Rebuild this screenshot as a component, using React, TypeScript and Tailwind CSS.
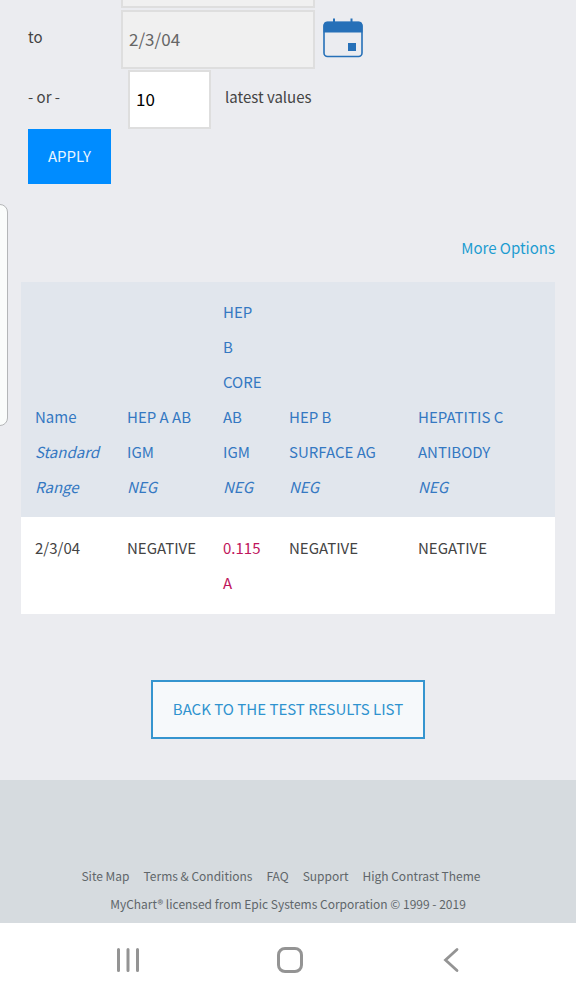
import React from "react";

const columns = [
  { name: "HEP A AB IGM", range: "NEG", width: "w-[96px]" },
  { name: "HEP B CORE AB IGM", range: "NEG", width: "w-[66px]" },
  { name: "HEP B SURFACE AG", range: "NEG", width: "w-[129px]" },
  { name: "HEPATITIS C ANTIBODY", range: "NEG", width: "" },
];

const results = [
  { value: "NEGATIVE", flagged: false },
  { value: "0.115 A", flagged: true },
  { value: "NEGATIVE", flagged: false },
  { value: "NEGATIVE", flagged: false },
];

const footerLinks = ["Site Map", "Terms & Conditions", "FAQ", "Support", "High Contrast Theme"];

function CalendarIcon() {
  return (
    <svg viewBox="0 0 40 40" className="h-10 w-10" fill="none" aria-hidden="true">
      <path d="M11 0.5v5M28.5 0.5v5" stroke="#2670b8" strokeWidth="2" />
      <rect x="1" y="4.5" width="38" height="34" rx="3.5" stroke="#2670b8" strokeWidth="1.6" />
      <path d="M0.5 14.5V7.5a4 4 0 0 1 4-4h31a4 4 0 0 1 4 4v7z" fill="#2670b8" />
      <rect x="25" y="25" width="8" height="8" fill="#2670b8" />
    </svg>
  );
}

function FilterForm() {
  return (
    <form className="flex flex-col pl-7" onSubmit={(e) => e.preventDefault()}>
      <input
        aria-label="from"
        readOnly
        className="ml-[93px] h-2 w-[194px] border-2 border-t-0 border-[#dedede] bg-[#f0f0f0]"
      />
      <div className="mt-[2px] flex items-center">
        <label htmlFor="to-date" className="w-[93px] pb-1">to</label>
        <input
          id="to-date"
          readOnly
          defaultValue="2/3/04"
          className="h-[59px] w-[194px] border-2 border-[#dedede] bg-[#f0f0f0] px-[6px] pb-[2px] text-[17px] text-[#666]"
        />
        <button type="button" aria-label="Choose date" className="ml-2 pb-1">
          <CalendarIcon />
        </button>
      </div>
      <div className="mt-px flex items-center">
        <label htmlFor="latest" className="w-[100px] pb-1">- or -</label>
        <input
          id="latest"
          defaultValue="10"
          className="h-[59px] w-[83px] border-2 border-[#dedede] bg-white px-[6px] pb-[2px] text-[17px] text-black"
        />
        <span className="ml-[14px] pb-1">latest values</span>
      </div>
      <button type="submit" className="h-[55px] self-start bg-[#008cff] px-5 text-[#e8f5ff]">
        APPLY
      </button>
    </form>
  );
}

function ResultsTable() {
  return (
    <table className="w-full table-fixed text-left leading-[35px]">
      <thead className="bg-[#e1e6ed] align-bottom text-[#3478c2]">
        <tr>
          <th scope="col" className="w-[92px] px-[14px] pt-3 pb-[13px] font-normal">
            Name <i className="block">Standard Range</i>
          </th>
          {columns.map((c) => (
            <th key={c.name} scope="col" className={`${c.width} px-[14px] pt-3 pb-[13px] font-normal`}>
              {c.name} <i className="block">{c.range}</i>
            </th>
          ))}
        </tr>
      </thead>
      <tbody className="bg-white align-top text-[#444]">
        <tr>
          <td className="px-[14px] pt-[13px] pb-[14px]">2/3/04</td>
          {results.map((r, i) => (
            <td
              key={i}
              className={r.flagged ? "px-[14px] pt-[13px] pb-[14px] text-[#c0155c]" : "px-[14px] pt-[13px] pb-[14px]"}
            >
              {r.value}
            </td>
          ))}
        </tr>
      </tbody>
    </table>
  );
}

function NavigationBar() {
  return (
    <nav className="flex h-[77px] items-center justify-between bg-white pr-[110px] pb-[3px] pl-[114px] text-[#949494]">
      <button type="button" aria-label="Recent apps">
        <svg viewBox="0 0 28 28" className="h-7 w-7" stroke="currentColor" strokeWidth="3" strokeLinecap="round">
          <path d="M4.5 3.5v21M14 3.5v21M23.5 3.5v21" />
        </svg>
      </button>
      <button type="button" aria-label="Home">
        <svg viewBox="0 0 28 28" className="h-7 w-7" fill="none" stroke="currentColor" strokeWidth="3">
          <rect x="2.5" y="2.5" width="23" height="23" rx="6.5" />
        </svg>
      </button>
      <button type="button" aria-label="Back">
        <svg
          viewBox="0 0 28 28"
          className="h-7 w-7"
          fill="none"
          stroke="currentColor"
          strokeWidth="2.8"
          strokeLinecap="round"
        >
          <path d="M19 3.5L7.5 14L19 24.5" />
        </svg>
      </button>
    </nav>
  );
}

export default function App() {
  return (
    <div className="relative flex min-h-screen flex-col overflow-hidden bg-[#ebecf0] font-['Noto_Sans_CJK_SC','Noto_Sans',sans-serif] text-[15px] text-[#444]">
      <main>
        <FilterForm />
        <div className="px-[21px]">
          <div className="mt-[46px] mb-4 flex justify-end">
            <a href="#options" className="leading-[36px] text-[#1d9cd0]">More Options</a>
          </div>
          <ResultsTable />
          <div className="mt-[66px] mb-[41px] flex justify-center">
            <button type="button" className="h-[59px] border-2 border-[#3595cf] bg-[#f6f9fb] px-5 text-[#2f93cf]">
              BACK TO THE TEST RESULTS LIST
            </button>
          </div>
        </div>
      </main>
      <footer className="flex grow flex-col items-center bg-[#d6dbdf] pt-[82px] pb-[5px] text-[12px] leading-[28px] text-[#60666a]">
        <div className="flex gap-[14px] pr-[14px]">
          {footerLinks.map((l) => (
            <a key={l} href="#footer">{l}</a>
          ))}
        </div>
        <p>MyChart® licensed from Epic Systems Corporation © 1999 - 2019</p>
      </footer>
      <NavigationBar />
      <div className="absolute top-[204px] -left-3 h-[222px] w-5 rounded-lg border border-[#b4b6b8] bg-[#fafcfb]" />
    </div>
  );
}
